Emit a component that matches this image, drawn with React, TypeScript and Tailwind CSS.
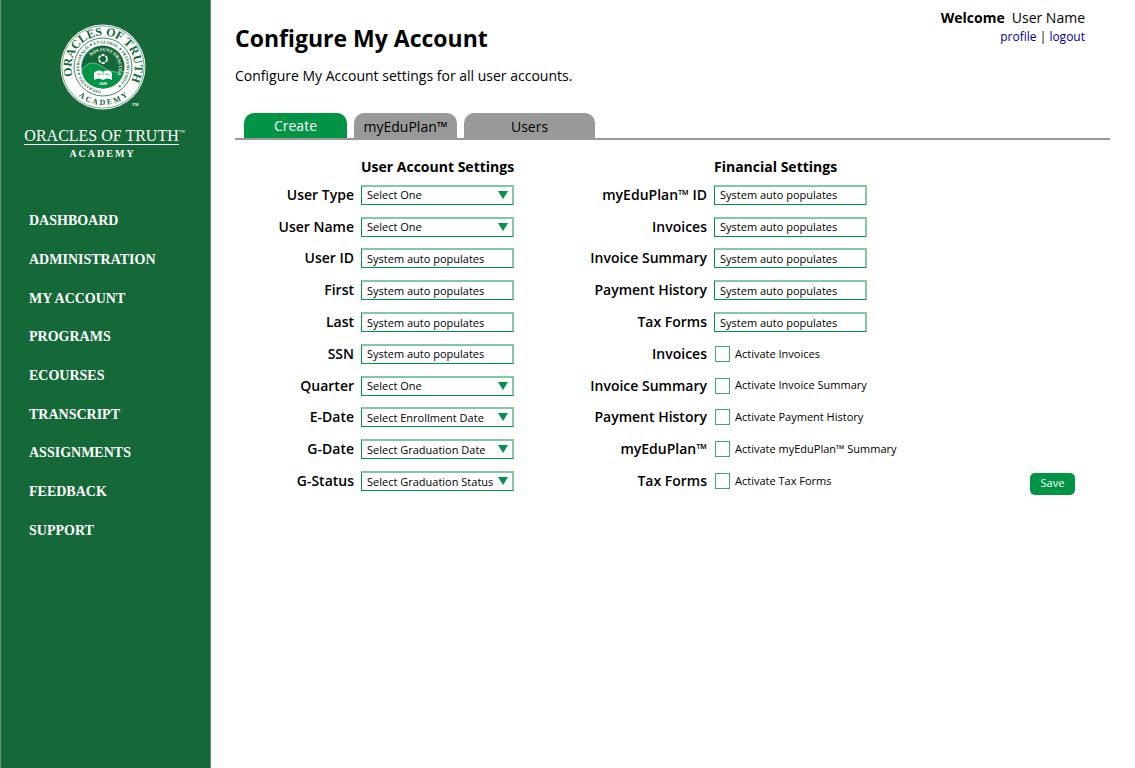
import { useState } from "react";

type Field = {
  id: string;
  label: string;
  kind: "select" | "text" | "check";
  value: string;
};

const navItems = [
  "DASHBOARD",
  "ADMINISTRATION",
  "MY ACCOUNT",
  "PROGRAMS",
  "ECOURSES",
  "TRANSCRIPT",
  "ASSIGNMENTS",
  "FEEDBACK",
  "SUPPORT",
];

const accountFields: Field[] = [
  { id: "user-type", label: "User Type", kind: "select", value: "Select One" },
  { id: "user-name", label: "User Name", kind: "select", value: "Select One" },
  { id: "user-id", label: "User ID", kind: "text", value: "System auto populates" },
  { id: "first", label: "First", kind: "text", value: "System auto populates" },
  { id: "last", label: "Last", kind: "text", value: "System auto populates" },
  { id: "ssn", label: "SSN", kind: "text", value: "System auto populates" },
  { id: "quarter", label: "Quarter", kind: "select", value: "Select One" },
  { id: "e-date", label: "E-Date", kind: "select", value: "Select Enrollment Date" },
  { id: "g-date", label: "G-Date", kind: "select", value: "Select Graduation Date" },
  { id: "g-status", label: "G-Status", kind: "select", value: "Select Graduation Status" },
];

const financialFields: Field[] = [
  { id: "plan-id", label: "myEduPlan™ ID", kind: "text", value: "System auto populates" },
  { id: "invoices", label: "Invoices", kind: "text", value: "System auto populates" },
  { id: "invoice-summary", label: "Invoice Summary", kind: "text", value: "System auto populates" },
  { id: "payment-history", label: "Payment History", kind: "text", value: "System auto populates" },
  { id: "tax-forms", label: "Tax Forms", kind: "text", value: "System auto populates" },
  { id: "on-invoices", label: "Invoices", kind: "check", value: "Activate Invoices" },
  { id: "on-summary", label: "Invoice Summary", kind: "check", value: "Activate Invoice Summary" },
  { id: "on-history", label: "Payment History", kind: "check", value: "Activate Payment History" },
  { id: "on-plan", label: "myEduPlan™", kind: "check", value: "Activate myEduPlan™ Summary" },
  { id: "on-tax", label: "Tax Forms", kind: "check", value: "Activate Tax Forms" },
];

const tabs = [
  { name: "Create", size: "w-[103px]" },
  { name: "myEduPlan™", size: "w-[103px]" },
  { name: "Users", size: "w-[131px]" },
];

function Seal() {
  return (
    <svg viewBox="-43 -43 86 86" className="h-[86px] w-[86px] overflow-visible" role="img" aria-label="Academy seal">
      <defs>
        <path id="outer-top" d="M-31.5 0A31.5 31.5 0 1 1 31.5 0A31.5 31.5 0 0 1 -31.5 0" transform="rotate(-17)" />
        <path id="outer-bottom" d="M-38 0A38 38 0 0 0 38 0" />
        <path id="middle" d="M0 23.7A23.7 23.7 0 0 1 0 -23.7A23.7 23.7 0 0 1 0 23.7" transform="rotate(5)" />
        <path id="inner-top" d="M-16 0A16 16 0 1 1 16 0A16 16 0 0 1 -16 0" transform="rotate(42)" />
      </defs>
      <circle r="42.5" fill="#fff" />
      <circle r="41.2" fill="none" stroke="#156837" strokeWidth="0.6" />
      <circle r="29" fill="none" stroke="#156837" strokeWidth="0.8" />
      <circle r="21.5" fill="#156837" />
      <path d="M0 -21.5A21.5 21.5 0 0 0 -21.3 3C-16 -4 -10 -6 -4 -2C4 4 11 7 21 4A21.5 21.5 0 0 1 -4 21.1C-16 19 -21 10 -21.3 3C-21.5 -10 -12 -20 0 -21.5Z" fill="#009444" />
      <path d="M-21 3C-15 -6 -8 -5 -2 -1C5 4 13 7 21 4" fill="none" stroke="#7fc99f" strokeWidth="0.8" />
      <circle cy="-8" r="4" fill="none" stroke="#fff" strokeWidth="1.8" strokeDasharray="3.2 1" />
      <path d="M-9 6C-6 3 -3 3 0 5C3 3 6 3 9 6V13C6 11 3 11 0 13C-3 11 -6 11 -9 13Z" fill="#fff" />
      <path d="M0 5V8M-6 7.5Q-4 6.5 -2 7.5M2 7.5Q4 6.5 6 7.5" fill="none" stroke="#156837" strokeWidth="0.6" />
      <g fill="#156837" fontFamily="Liberation Serif, serif" fontWeight="700">
        <text fontSize="12">
          <textPath href="#outer-top">ORACLES OF TRUTH</textPath>
        </text>
        <text fontSize="8" textAnchor="middle">
          <textPath href="#outer-bottom" startOffset="50%">A&#160;C&#160;A&#160;D&#160;E&#160;M&#160;Y</textPath>
        </text>
        <text fontSize="4.2">
          <textPath href="#middle">OPERANTES ✦ PERSONALIS ✦ ET GLOBAL ✦ TRANSMUTATIO ✦</textPath>
        </text>
      </g>
      <g fill="#fff" fontFamily="Liberation Serif, serif" fontWeight="700">
        <text fontSize="4.5">
          <textPath href="#inner-top">NOS SUNT ORACULA</textPath>
        </text>
        <text y="18" fontSize="4" textAnchor="middle">2009</text>
        <text x="29" y="39" fontSize="4">TM</text>
      </g>
    </svg>
  );
}

function Sidebar() {
  return (
    <aside className="w-[211px] shrink-0 border-x border-[#5b9573] bg-[#156837] font-['Liberation_Serif',serif] text-white">
      <div className="flex flex-col items-center pt-6 pr-[6px]">
        <Seal />
        <div className="mt-[18px] flex items-start pl-1">
          <span className="border-b border-white text-base leading-4">ORACLES OF TRUTH</span>
          <span className="text-[6px] leading-2">™</span>
        </div>
        <span className="mt-[3px] text-[10px] leading-3 font-bold tracking-[2px]">ACADEMY</span>
      </div>
      <nav className="mt-[42px] pl-7">
        <ul className="grid h-[348px] grid-rows-9 items-center text-sm font-bold">
          {navItems.map((item) => (
            <li key={item}>
              <a href="#">{item}</a>
            </li>
          ))}
        </ul>
      </nav>
    </aside>
  );
}

const boxClass =
  "h-5 w-full appearance-none rounded-none border border-t-2 border-r-2 border-[#009444] border-t-[#80c9a1] border-r-[#80c9a1] bg-white pl-[5px] text-[11px] leading-4 text-black outline-none";

function Control({ field }: { field: Field }) {
  if (field.kind === "select") {
    return (
      <div className="relative flex w-[153px] items-center">
        <select id={field.id} className={boxClass}>
          <option>{field.value}</option>
        </select>
        <svg viewBox="0 0 10 8" className="pointer-events-none absolute right-[6px] h-2 w-[10px]" aria-hidden="true">
          <path d="M0 0H10L5 8Z" fill="#009444" />
        </svg>
      </div>
    );
  }
  if (field.kind === "text") {
    return (
      <div className="flex w-[153px] items-center">
        <input id={field.id} type="text" readOnly defaultValue={field.value} className={`${boxClass} pb-px`} />
      </div>
    );
  }
  return (
    <div className="flex w-[153px] items-center gap-[5px] pl-px text-[11px] whitespace-nowrap">
      <input
        id={field.id}
        type="checkbox"
        className="h-4 w-[15px] shrink-0 appearance-none border border-[#3cab6f] bg-white checked:bg-[#009444]"
      />
      <label htmlFor={field.id}>{field.value}</label>
    </div>
  );
}

function FieldColumn({ title, fields }: { title: string; fields: Field[] }) {
  return (
    <section className="w-[279px]">
      <h2 className="pl-[126px] text-sm leading-5 font-bold whitespace-nowrap">{title}</h2>
      <div className="mt-[2px] grid h-[318px] grid-rows-10">
        {fields.map((field) => (
          <div key={field.id} className="flex items-center gap-[7px]">
            <label htmlFor={field.id} className="w-[119px] text-right text-sm font-semibold whitespace-nowrap">
              {field.label}
            </label>
            <Control field={field} />
          </div>
        ))}
      </div>
    </section>
  );
}

export default function App() {
  const [active, setActive] = useState("Create");
  return (
    <div className="flex min-h-screen bg-white font-['Open_Sans',sans-serif] text-black">
      <Sidebar />
      <main className="min-w-0 flex-1 pr-[25px] pl-6">
        <header className="flex justify-between pr-[25px]">
          <div className="pt-[22px]">
            <h1 className="text-[23px] leading-8 font-bold">Configure My Account</h1>
            <p className="mt-3 text-sm">Configure My Account settings for all user accounts.</p>
          </div>
          <div className="pt-2 text-right">
            <p className="flex gap-[7px] text-sm">
              <strong>Welcome</strong>
              <span>User Name</span>
            </p>
            <p className="text-xs leading-[18px]">
              <a href="#" className="text-[#00009c]">profile</a> | <a href="#" className="text-[#00009c]">logout</a>
            </p>
          </div>
        </header>
        <div role="tablist" className="mt-[27px] flex gap-[7px] border-b-2 border-[#999] pl-[9px]">
          {tabs.map((tab) => (
            <button
              key={tab.name}
              type="button"
              role="tab"
              aria-selected={active === tab.name}
              onClick={() => setActive(tab.name)}
              className={`${tab.size} h-[25px] rounded-t-[10px] text-sm ${
                active === tab.name ? "bg-[#009444] text-white" : "bg-[#999] pt-[2px] text-black"
              }`}
            >
              {tab.name}
            </button>
          ))}
        </div>
        <form className="mt-[17px] flex items-end" onSubmit={(event) => event.preventDefault()}>
          <FieldColumn title="User Account Settings" fields={accountFields} />
          <div className="ml-[74px]">
            <FieldColumn title="Financial Settings" fields={financialFields} />
          </div>
          <button
            type="submit"
            className="mr-[35px] mb-[2px] ml-auto h-[22px] w-[45px] rounded-[5px] bg-[#009444] pb-[2px] text-[11px] text-white"
          >
            Save
          </button>
        </form>
      </main>
    </div>
  );
}
